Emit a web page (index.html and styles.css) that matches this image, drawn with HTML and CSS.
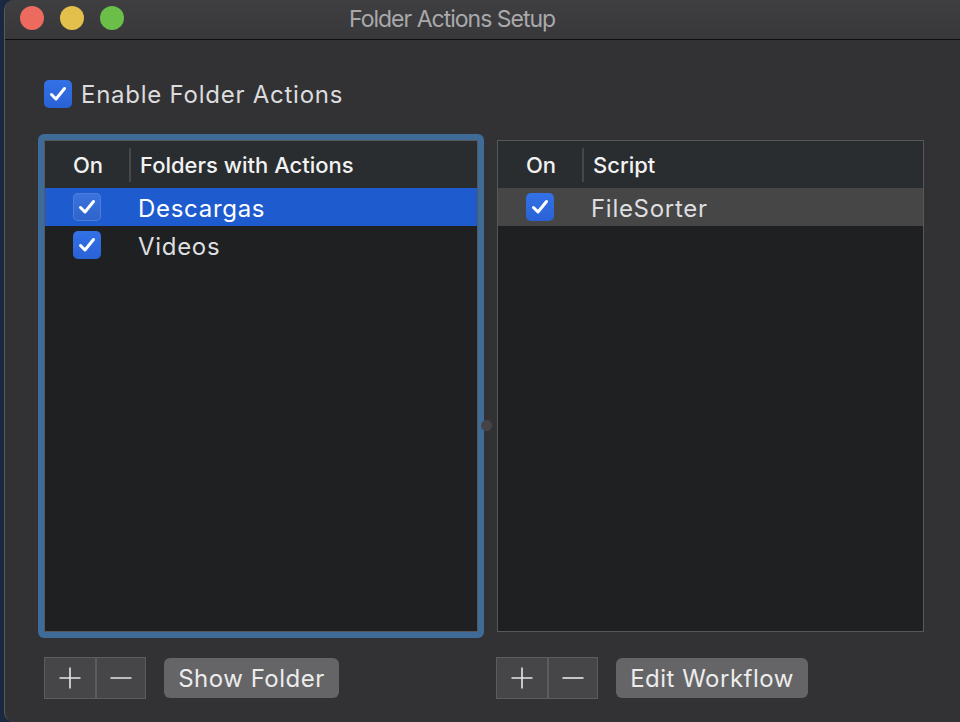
FILE: index.html
```html
<!DOCTYPE html>
<html>
<head>
<meta charset="utf-8">
<link rel="stylesheet" href="styles.css">
</head>
<body>
<div class="window">
  <div class="titlebar">
    <div class="lights">
      <span class="light red"></span>
      <span class="light yellow"></span>
      <span class="light green"></span>
    </div>
    <div class="title">Folder Actions Setup</div>
  </div>
  <div class="content">
    <label class="enable">
      <span class="cb"><svg viewBox="0 0 28 28"><polyline points="7.5,14.5 12,19 20.5,8.5"/></svg></span>
      <span class="enable-text">Enable Folder Actions</span>
    </label>
    <div class="panes">
      <div class="pane">
        <div class="ring focused">
          <div class="table left">
            <div class="thead">
              <div class="col-on">On</div>
              <div class="sep"></div>
              <div class="col-name">Folders with Actions</div>
            </div>
            <div class="row selected">
              <div class="col-on"><span class="cb cb-sel"><svg viewBox="0 0 28 28"><polyline points="7.5,14.5 12,19 20.5,8.5"/></svg></span></div>
              <div class="col-name">Descargas</div>
            </div>
            <div class="row">
              <div class="col-on"><span class="cb"><svg viewBox="0 0 28 28"><polyline points="7.5,14.5 12,19 20.5,8.5"/></svg></span></div>
              <div class="col-name">Videos</div>
            </div>
          </div>
        </div>
        <div class="controls">
          <div class="segmented">
            <div class="seg"><svg viewBox="0 0 22 22"><path d="M11 0.5V21.5M0.5 11H21.5"/></svg></div>
            <div class="seg"><svg viewBox="0 0 22 22"><path d="M0.5 11H21.5"/></svg></div>
          </div>
          <div class="btn btn-show">Show Folder</div>
        </div>
      </div>
      <div class="pane">
        <div class="ring">
          <div class="table right">
            <div class="thead">
              <div class="col-on">On</div>
              <div class="sep"></div>
              <div class="col-name">Script</div>
            </div>
            <div class="row inactive-sel">
              <div class="col-on"><span class="cb"><svg viewBox="0 0 28 28"><polyline points="7.5,14.5 12,19 20.5,8.5"/></svg></span></div>
              <div class="col-name">FileSorter</div>
            </div>
          </div>
        </div>
        <div class="controls">
          <div class="segmented">
            <div class="seg"><svg viewBox="0 0 22 22"><path d="M11 0.5V21.5M0.5 11H21.5"/></svg></div>
            <div class="seg"><svg viewBox="0 0 22 22"><path d="M0.5 11H21.5"/></svg></div>
          </div>
          <div class="btn btn-edit">Edit Workflow</div>
        </div>
      </div>
      <span class="split-dot"></span>
    </div>
  </div>
</div>
</body>
</html>
```

FILE: styles.css
```css
* { box-sizing: border-box; }
html, body { margin: 0; padding: 0; }
body {
  width: 960px;
  height: 722px;
  overflow: hidden;
  background: #1b2940;
  font-family: "Inter", "Roboto", "Liberation Sans", sans-serif;
}
.window {
  margin-left: 4px;
  width: 956px;
  height: 722px;
  background: #323234;
  border-left: 1px solid #5a5a5c;
  border-radius: 10px 0 0 10px;
  overflow: hidden;
  display: flex;
  flex-direction: column;
}
.titlebar {
  height: 40px;
  flex: none;
  background: linear-gradient(#3f3f41, #38383a);
  border-bottom: 1px solid #0f0f10;
  display: flex;
  align-items: center;
}
.lights {
  display: flex;
  gap: 16px;
  padding-left: 15px;
  margin-top: -3px;
}
.light {
  width: 24px;
  height: 24px;
  border-radius: 50%;
  display: block;
}
.red { background: #ed6a5e; }
.yellow { background: #e2c04b; }
.green { background: #6bbf48; }
.title {
  margin-left: 225px;
  margin-top: -2px;
  color: #a9a9ab;
  font-size: 23px;
  letter-spacing: -1px;
}
.content {
  padding: 40px 0 0 33px;
}
.enable {
  display: flex;
  align-items: center;
  gap: 9px;
  padding-left: 6px;
  height: 28px;
}
.enable-text {
  color: #dcdcde;
  font-size: 24px;
  letter-spacing: 0.75px;
}
.cb {
  width: 28px;
  height: 28px;
  border-radius: 5px;
  background: linear-gradient(#3371e6, #2a62d6);
  display: block;
  flex: none;
}
.cb svg {
  width: 28px;
  height: 28px;
  display: block;
}
.cb polyline {
  fill: none;
  stroke: #ffffff;
  stroke-width: 3;
  stroke-linecap: round;
  stroke-linejoin: round;
}
.cb-sel {
  background: linear-gradient(#3b73dc, #2f63cc);
  box-shadow: inset 0 0 0 1px #4e7fd8;
}
.panes {
  position: relative;
  display: flex;
  gap: 7px;
  margin-top: 26px;
}
.pane {
  display: flex;
  flex-direction: column;
}
.ring {
  padding: 6px;
  border-radius: 6px;
}
.ring.focused {
  background: #3e6b98;
}
.table {
  height: 492px;
  border: 1px solid #58585a;
  background: #1f2022;
}
.table.left { width: 434px; }
.table.right { width: 427px; }
.thead {
  height: 47px;
  background: #2a2d2f;
  display: flex;
  align-items: center;
  color: #f2f2f2;
  font-size: 22px;
  font-weight: 500;
  padding-top: 1px;
}
.col-on {
  width: 85px;
  padding-left: 28px;
  flex: none;
}
.sep {
  width: 2px;
  height: 34px;
  background: #45474a;
  flex: none;
  margin-left: -1px;
}
.thead .col-name {
  padding-left: 9px;
}
.row {
  height: 38px;
  display: flex;
  align-items: center;
  color: #dedee0;
  font-size: 24px;
  letter-spacing: 0.7px;
}
.row .col-name {
  padding-left: 8px;
  padding-top: 2px;
}
.row.selected {
  background: #1d5bcf;
  color: #ffffff;
}
.row.inactive-sel {
  background: #464646;
}
.controls {
  display: flex;
  align-items: center;
  gap: 18px;
  padding: 19px 0 0 6px;
}
.pane + .pane .controls {
  padding-left: 5px;
}
.segmented {
  display: flex;
  height: 42px;
  border: 1px solid #5c5c5e;
  background: #464648;
}
.seg {
  width: 50px;
  height: 40px;
  display: flex;
  align-items: center;
  justify-content: center;
}
.seg + .seg {
  border-left: 2px solid #5c5c5e;
}
.seg svg {
  width: 22px;
  height: 22px;
  display: block;
}
.seg path {
  stroke: #e6e6e6;
  stroke-width: 1.6;
  fill: none;
}
.btn {
  height: 40px;
  background: #656567;
  border-radius: 6px;
  color: #ececec;
  font-size: 24px;
  letter-spacing: 0.5px;
  display: flex;
  align-items: center;
  justify-content: center;
}
.btn-show { width: 175px; }
.btn-edit { width: 192px; }
.split-dot {
  position: absolute;
  left: 443px;
  top: 286px;
  width: 11px;
  height: 11px;
  border-radius: 50%;
  background: #444446;
}
```
